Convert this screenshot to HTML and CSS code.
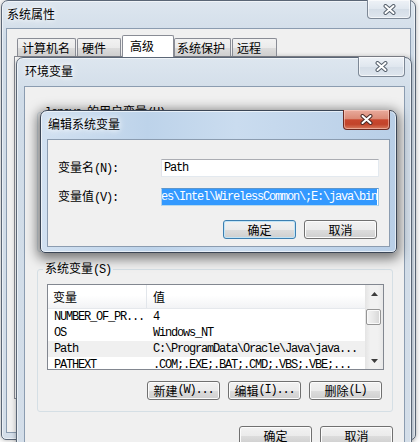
FILE: index.html
```html
<!DOCTYPE html>
<html lang="zh-CN">
<head>
<meta charset="UTF-8">
<title>编辑系统变量</title>
<link rel="stylesheet" href="styles.css">
</head>
<body>
    <!-- 系统属性 -->
    <div class="win sys">
        <div class="title">
            <span class="caption">系统属性</span>
            <span class="close">
                <svg width="13" height="11" viewBox="0 0 13 11"><path d="M2.5 2 L10.5 9 M10.5 2 L2.5 9" stroke="#56606c" stroke-width="4" stroke-linecap="round"/><path d="M2.5 2 L10.5 9 M10.5 2 L2.5 9" stroke="#fff" stroke-width="2" stroke-linecap="round"/></svg>
            </span>
        </div>
        <div class="client">
            <div class="tabs">
                <div class="tab t1">计算机名</div>
                <div class="tab t2">硬件</div>
                <div class="tab sel">高级</div>
                <div class="tab t4">系统保护</div>
                <div class="tab t5">远程</div>
            </div>
            <div class="page"></div>
        </div>
    </div>

    <!-- 环境变量 -->
    <div class="win env">
        <div class="title">
            <span class="caption">环境变量</span>
            <span class="close wide">
                <svg width="13" height="11" viewBox="0 0 13 11"><path d="M2.5 2 L10.5 9 M10.5 2 L2.5 9" stroke="#56606c" stroke-width="4" stroke-linecap="round"/><path d="M2.5 2 L10.5 9 M10.5 2 L2.5 9" stroke="#fff" stroke-width="2" stroke-linecap="round"/></svg>
            </span>
        </div>
        <div class="client">
            <fieldset class="group user">
                <legend><span class="m">lenovo </span>的用户变量<span class="m">(U)</span></legend>
            </fieldset>
            <fieldset class="group sysvars">
                <legend>系统变量<span class="m">(S)</span></legend>
                <div class="list">
                    <div class="lv">
                        <div class="lv-head">
                            <div class="hcell k">变量</div>
                            <div class="hcell v">值</div>
                        </div>
                        <div class="row"><span class="cell k m">NUMBER_OF_PR...</span><span class="cell v m">4</span></div>
                        <div class="row"><span class="cell k m">OS</span><span class="cell v m">Windows_NT</span></div>
                        <div class="row hot"><span class="cell k m">Path</span><span class="cell v m">C:\ProgramData\Oracle\Java\java...</span></div>
                        <div class="row"><span class="cell k m">PATHEXT</span><span class="cell v m">.COM;.EXE;.BAT;.CMD;.VBS;.VBE;...</span></div>
                    </div>
                    <div class="sb">
                        <div class="sb-btn"><svg width="7" height="4" viewBox="0 0 7 4"><polygon points="0,4 3.5,0 7,4" fill="#3c3c3c"/></svg></div>
                        <div class="track"><div class="thumb"></div></div>
                        <div class="sb-btn"><svg width="7" height="4" viewBox="0 0 7 4"><polygon points="0,0 7,0 3.5,4" fill="#3c3c3c"/></svg></div>
                    </div>
                </div>
                <div class="btns">
                    <div class="btn">新建<span class="m">(W)...</span></div>
                    <div class="btn">编辑<span class="m">(I)...</span></div>
                    <div class="btn">删除<span class="m">(L)</span></div>
                </div>
            </fieldset>
            <div class="btns foot">
                <div class="btn">确定</div>
                <div class="btn">取消</div>
            </div>
        </div>
    </div>

    <!-- 编辑系统变量 -->
    <div class="win edit">
        <div class="title">
            <span class="caption">编辑系统变量</span>
            <span class="close wide red">
                <svg width="13" height="11" viewBox="0 0 13 11"><path d="M2.5 2 L10.5 9 M10.5 2 L2.5 9" stroke="#4a2a26" stroke-width="4" stroke-linecap="round"/><path d="M2.5 2 L10.5 9 M10.5 2 L2.5 9" stroke="#fff" stroke-width="2" stroke-linecap="round"/></svg>
            </span>
        </div>
        <div class="client">
            <div class="form">
                <label>变量名<span class="m">(N):</span></label>
                <div class="field"><span class="m">Path</span></div>
                <label>变量值<span class="m">(V):</span></label>
                <div class="field focus"><span class="sel-text m">%SystemRoot%\system32;C:\Program Files\Intel\WirelessCommon\;E:\java\bin</span></div>
            </div>
            <div class="btns">
                <div class="btn def">确定</div>
                <div class="btn">取消</div>
            </div>
        </div>
    </div>
</body>
</html>
```

FILE: styles.css
```css
body {
    margin: 0;
    width: 420px;
    height: 442px;
    overflow: hidden;
    position: relative;
    background: #fbfbfb;
    font-family: "Noto Sans CJK SC", sans-serif;
    font-size: 12px;
    color: #000;
}

.m {
    font-family: "Liberation Mono", monospace;
    font-size: 12px;
    letter-spacing: -1.2px;
}

/* windows */
.win {
    position: absolute;
    box-sizing: border-box;
    display: flex;
    flex-direction: column;
    border: 1px solid #5a6676;
    border-radius: 7px 7px 5px 5px;
    box-shadow: inset 0 0 0 1px rgba(255, 255, 255, 0.55), 0 0 5px rgba(0, 0, 0, 0.3);
    background: linear-gradient(180deg, #dde6ef, #d0dce8 40px, #d4dee9);
}

.sys {
    left: 1px;
    top: 0;
    width: 415px;
    height: 440px;
    padding: 0 4px 6px;
}

.env {
    left: 16px;
    top: 57px;
    width: 396px;
    height: 420px;
    padding: 0 6px 0 7px;
}

.edit {
    left: 40px;
    top: 110px;
    width: 357px;
    height: 143px;
    padding: 0 6px 5px;
    border-color: #3b4656;
    background: linear-gradient(90deg, #d2e1f1, #bdd3ea 30%, #cadcef 55%, #b9cfe7);
    box-shadow: inset 0 0 0 1px rgba(255, 255, 255, 0.6), 0 3px 12px 3px rgba(0, 0, 0, 0.5);
}

.title {
    flex: none;
    height: 28px;
    display: flex;
    justify-content: space-between;
    align-items: flex-start;
}

.sys .title {
    height: 27px;
}

.caption {
    line-height: 26px;
    padding-left: 1px;
    text-shadow: 0 0 5px #fff, 0 0 9px #fff;
}

.close {
    box-sizing: border-box;
    width: 44px;
    height: 19px;
    margin-top: -1px;
    border: 1px solid #7d8896;
    border-top: none;
    border-radius: 0 0 4px 4px;
    display: flex;
    align-items: center;
    justify-content: center;
    background: linear-gradient(#eef2f7, #e0e7ef 50%, #d4dde7 51%, #dfe6ee);
    box-shadow: inset 0 0 0 1px rgba(255, 255, 255, 0.6);
}

.close.wide {
    width: 47px;
    height: 20px;
}

.close.red {
    border-color: #6b2a22;
    background: linear-gradient(#e9ab9d, #db8b77 45%, #c8472e 52%, #c2432a 75%, #d77b5e);
    box-shadow: inset 0 0 0 1px rgba(255, 220, 210, 0.5);
}

.client {
    flex: 1;
    min-height: 0;
    box-sizing: border-box;
    display: flex;
    flex-direction: column;
    background: #f0f0f0;
    border: 1px solid #8b9cb0;
}

/* tabs */
.tabs {
    position: relative;
    z-index: 1;
    display: flex;
    align-items: flex-end;
    height: 21px;
    margin: 6px 0 0 10px;
}

.tab {
    box-sizing: border-box;
    height: 18px;
    margin-right: 1px;
    padding-left: 4px;
    line-height: 17px;
    border: 1px solid #898c95;
    border-bottom: none;
    border-radius: 2px 2px 0 0;
    background: linear-gradient(#f2f2f2, #ebebeb 50%, #dddddd 51%, #cfcfcf);
}

.t1 { width: 59px; }
.t2 { width: 44px; }
.t4 { width: 57px; padding-left: 2px; }
.t5 { width: 45px; }

.tab.sel {
    width: 52px;
    height: 22px;
    margin: 0 0 -1px;
    padding-left: 7px;
    line-height: 20px;
    background: #fff;
}

.page {
    box-sizing: border-box;
    height: 343px;
    margin: 0 5px 0 7px;
    border: 1px solid #898c95;
    background: #fff;
}

/* group boxes */
.group {
    min-width: 0;
    margin: 0 11px 0 12px;
    padding: 0 8px 11px 9px;
    border: 1px solid #d5dfe5;
    border-radius: 3px;
}

.group legend {
    margin-left: -4px;
    padding: 0 2px;
    line-height: 14px;
}

.user {
    box-sizing: border-box;
    height: 148px;
    margin-top: 17px;
}

.sysvars {
    margin-top: 9px;
    padding-top: 7px;
}

/* list view */
.list {
    box-sizing: border-box;
    height: 86px;
    display: flex;
    border: 1px solid #828790;
    background: #fff;
}

.lv {
    flex: 1;
    overflow: hidden;
}

.lv-head {
    display: flex;
    height: 23px;
    line-height: 23px;
    border-bottom: 1px solid #e5e8ec;
    background: linear-gradient(#fff, #fff 45%, #f2f3f5);
}

.hcell.k {
    box-sizing: border-box;
    width: 99px;
    padding-left: 5px;
    border-right: 1px solid #e2e6eb;
}

.hcell.v {
    padding-left: 6px;
}

.row {
    display: flex;
    height: 16px;
    line-height: 16px;
    white-space: nowrap;
}

.row.hot {
    background: #f0f0f0;
}

.cell.k {
    box-sizing: border-box;
    width: 99px;
    padding-left: 6px;
}

.cell.v {
    padding-left: 6px;
}

.sb {
    width: 18px;
    display: flex;
    flex-direction: column;
    background: linear-gradient(90deg, #e4e4e4, #f1f1f1 30%, #f1f1f1 70%, #e8e8e8);
}

.sb-btn {
    height: 17px;
    display: flex;
    align-items: center;
    justify-content: center;
}

.track {
    flex: 1;
}

.thumb {
    box-sizing: border-box;
    height: 16px;
    margin: 7px 2px 0 1px;
    border: 1px solid #959595;
    border-radius: 2px;
    background: linear-gradient(90deg, #f4f4f4, #e7e7e7 50%, #d6d6d6);
    box-shadow: inset 0 0 0 1px #fafafa;
}

/* buttons */
.btns {
    display: flex;
    justify-content: flex-end;
    gap: 8px;
    margin: 11px 2px 0 0;
}

.foot {
    margin: 14px 11px 0 0;
}

.edit .btns {
    margin: 13px 12px 0 0;
}

.btn {
    box-sizing: border-box;
    width: 73px;
    height: 19px;
    display: flex;
    align-items: center;
    justify-content: center;
    line-height: 17px;
    border: 1px solid #707070;
    border-radius: 3px;
    background: linear-gradient(#f2f2f2, #ebebeb 50%, #dddddd 51%, #cfcfcf);
    box-shadow: inset 0 0 0 1px #fcfcfc;
}

.btn.def {
    border-color: #3c7fb1;
    box-shadow: inset 0 0 0 1px #c2e4f6;
}

/* edit form */
.form {
    display: grid;
    grid-template-columns: 103px 218px;
    row-gap: 9px;
    align-items: center;
    padding: 18px 0 0 10px;
}

.form label {
    line-height: 18px;
}

.field {
    box-sizing: border-box;
    height: 18px;
    padding: 0 2px;
    display: flex;
    align-items: center;
    overflow: hidden;
    white-space: nowrap;
    background: #fff;
    border: 1px solid;
    border-color: #abadb3 #e3e9ef #e3e9ef #e2e3ea;
}

.field.focus {
    padding: 0 1px;
    justify-content: flex-end;
    border-color: #5d96cc #a4c9e3 #b7d9ed #b5cfe7;
}

.sel-text {
    flex: none;
    line-height: 16px;
    background: #3399ff;
    color: #fff;
}
```
